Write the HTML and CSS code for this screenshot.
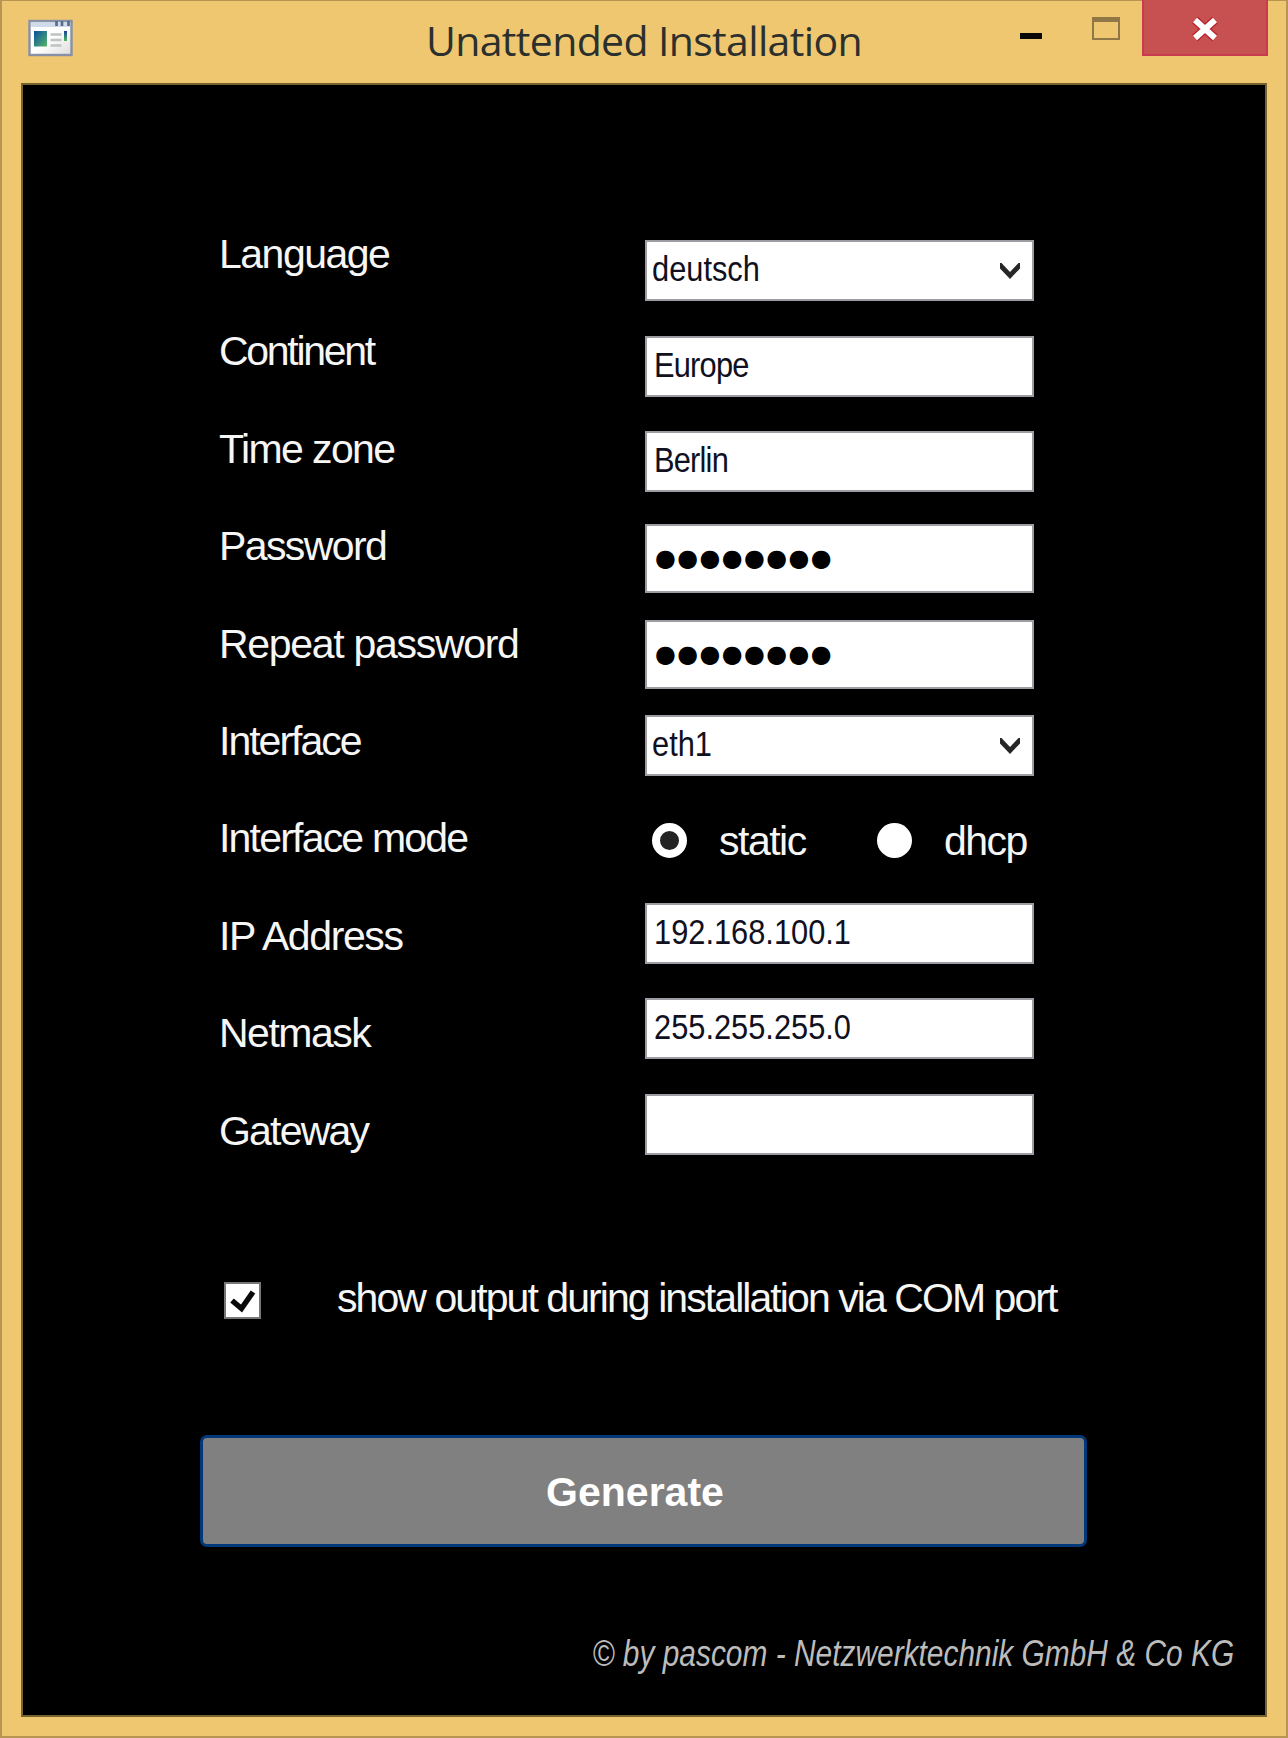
FILE: index.html
```html
<!DOCTYPE html>
<html lang="en">
<head>
<meta charset="utf-8">
<title>Unattended Installation</title>
<link rel="stylesheet" href="styles.css">
</head>
<body>
<div class="window">
  <header class="titlebar">
    <svg class="app-icon" width="46" height="38" viewBox="0 0 46 38">
      <defs>
        <linearGradient id="pane" x1="0" y1="0" x2="1" y2="1"><stop offset="0" stop-color="#0b4f9c"/><stop offset="1" stop-color="#55b56a"/></linearGradient>
        <linearGradient id="bar" x1="0" y1="0" x2="0" y2="1"><stop offset="0" stop-color="#1b3f9c"/><stop offset="1" stop-color="#4fb95c"/></linearGradient>
        <linearGradient id="paper" x1="0" y1="0" x2="1" y2="1"><stop offset="0.5" stop-color="#ffffff"/><stop offset="1" stop-color="#dcdcdc"/></linearGradient>
      </defs>
      <rect x="1.5" y="2" width="42" height="34" fill="url(#paper)" stroke="#8790a5" stroke-width="2.4"/>
      <rect x="3" y="3" width="39" height="5" fill="#cfdbe8"/>
      <path d="M28.5 2v5M34 2v5M40.5 2v5" stroke="#56698a" stroke-width="2.6"/>
      <rect x="6" y="12" width="13" height="15.500" fill="url(#pane)"/>
      <path d="M22.500 15.500h11M22.500 21h11M22.500 26.500h11" stroke="#bfc1c3" stroke-width="2.600"/>
      <rect x="36" y="12" width="3" height="10" fill="url(#bar)"/>
    </svg>
    <h1 class="title">Unattended Installation</h1>
    <div class="controls">
      <span class="minimize"></span>
      <span class="maximize"></span>
      <span class="close">
        <svg width="30" height="28" viewBox="0 0 30 28"><path d="M5 5L25 23M25 5L5 23" stroke="#b8202c" stroke-width="8.500"/><path d="M5 5L25 23M25 5L5 23" stroke="#fff" stroke-width="6"/></svg>
      </span>
    </div>
  </header>

  <main class="content">
    <section class="form">
      <div class="labels">
        <label class="t-language">Language</label>
        <label class="t-continent">Continent</label>
        <label class="t-timezone">Time zone</label>
        <label class="t-password">Password</label>
        <label class="t-repeat">Repeat password</label>
        <label class="t-interface">Interface</label>
        <label class="t-mode">Interface mode</label>
        <label class="t-ip">IP Address</label>
        <label class="t-netmask">Netmask</label>
        <label class="t-gateway">Gateway</label>
      </div>
      <div class="fields">
        <div class="field select"><span class="value">deutsch</span>
          <svg class="chevron" width="20" height="16" viewBox="0 0 20 16"><path d="M0 0h1.500L10 9L18.500 0H20V5.500L10 16L0 5.500Z"/></svg></div>
        <div class="field"><span class="value tight">Europe</span></div>
        <div class="field"><span class="value tight">Berlin</span></div>
        <div class="field secret"><span>●●●●●●●●</span></div>
        <div class="field secret repeat"><span>●●●●●●●●</span></div>
        <div class="field select interface"><span class="value">eth1</span>
          <svg class="chevron" width="20" height="16" viewBox="0 0 20 16"><path d="M0 0h1.500L10 9L18.500 0H20V5.500L10 16L0 5.500Z"/></svg></div>
        <div class="modes">
          <span class="radio checked"></span><span class="mode static">static</span>
          <span class="radio"></span><span class="mode">dhcp</span>
        </div>
        <div class="field"><span class="value">192.168.100.1</span></div>
        <div class="field"><span class="value">255.255.255.0</span></div>
        <div class="field"></div>
      </div>
    </section>

    <div class="output">
      <span class="checkbox"><svg width="33" height="33" viewBox="0 0 33 33"><path d="M6 16.500L15.500 24.500L27 8" fill="none" stroke="#0a0a0a" stroke-width="5.500"/></svg></span>
      <span class="output-text">show output during installation via COM port</span>
    </div>

    <button class="generate">Generate</button>

    <footer class="copyright"><span>© by pascom - Netzwerktechnik GmbH &amp; Co KG</span></footer>
  </main>
</div>
</body>
</html>
```

FILE: styles.css
```css
* { box-sizing: border-box; }

body {
  margin: 0;
  background: #eec770;
  font-family: "Liberation Sans", Arial, sans-serif;
}

.window {
  display: grid;
  grid-template-rows: 82px 1635px;
  width: 1288px;
  height: 1738px;
  padding: 0 20px 0 19px;
  background: #eec770;
  border: solid #b89550;
  border-width: 1px 2px 2px;
}

/* Title bar */
.titlebar {
  display: grid;
  grid-template-columns: 405px 594px 248px;
  align-items: start;
}

.app-icon { margin: 18px 0 0 7px; }

.title {
  margin: 11px 0 0;
  font: 400 41px/56px "Open Sans", "Noto Sans", sans-serif;
  letter-spacing: -0.650px;
  color: #2c302d;
  white-space: nowrap;
}

.controls { display: flex; align-items: flex-start; }

.minimize { width: 22px; height: 6px; margin: 32px 50px 0 0; background: #080808; }

.maximize {
  width: 28px;
  height: 23px;
  margin: 16px 22px 0 0;
  border: 2px solid #907846;
  border-top-width: 5px;
}

.close {
  display: flex;
  flex: none;
  align-items: center;
  justify-content: center;
  width: 126px;
  height: 56px;
  margin-top: -1px;
  padding-top: 4px;
  background: #c75050;
  border: solid #c73a50;
  border-width: 0 2px 2px;
}

/* Client area */
.content {
  width: 1246px;
  height: 1634px;
  background: #000;
  border: 2px solid #78622f;
  padding-top: 120px;
}

.form { display: flex; padding-left: 196px; }

.labels { display: flex; flex-direction: column; width: 426px; padding-top: 1px; }

.labels label {
  height: 97.4px;
  font-size: 41px;
  line-height: 97.4px;
  color: #f6f6f6;
  white-space: nowrap;
}

.t-language { letter-spacing: -1.5px; }
.t-continent { letter-spacing: -2.3px; }
.t-timezone { letter-spacing: -1.6px; }
.t-password { letter-spacing: -1.6px; }
.t-repeat { letter-spacing: -1.300px; }
.t-interface { letter-spacing: -2px; }
.t-mode { letter-spacing: -1.8px; }
.t-ip { letter-spacing: -1.4px; }
.t-netmask { letter-spacing: -1.5px; }
.t-gateway { letter-spacing: -1.8px; }

.fields { width: 389px; padding-top: 35px; }

.field {
  display: flex;
  align-items: center;
  justify-content: space-between;
  height: 61px;
  margin-bottom: 34.5px;
  padding: 0 12px 3px 7px;
  font-size: 35px;
  color: #101020;
  background: #fff;
  border: 2px solid #9c9ca2;
  white-space: nowrap;
}

.select { padding-left: 5px; }

.value { transform: scaleX(0.88); transform-origin: left center; }
.value.tight { letter-spacing: -0.900px; }

.chevron { margin-top: 4px; fill: #262626; }

.secret {
  height: 69px;
  margin: -2.500px 0 26.500px;
  padding: 0 0 1px 8px;
  font-family: "DejaVu Sans", sans-serif;
  font-size: 24px;
  letter-spacing: 1.300px;
  color: #000;
}

.secret.repeat { margin-top: 0; margin-bottom: 26px; }

.interface { margin-bottom: 0; }

.modes {
  display: flex;
  align-items: center;
  height: 127px;
  padding: 2px 0 0 7px;
  font-size: 41px;
  letter-spacing: -1.500px;
  color: #f6f6f6;
}

.radio { flex: none; width: 35px; height: 35px; background: #fff; border-radius: 50%; }
.radio.checked { background: #222; border: 8px solid #fff; }
.mode { margin-left: 32px; padding-top: 2px; }
.mode.static { width: 158px; }

/* Options and actions */
.output {
  display: flex;
  align-items: center;
  height: 46px;
  margin: 86px 0 0 201px;
  font-size: 41px;
  letter-spacing: -1.930px;
  color: #f6f6f6;
  white-space: nowrap;
}

.checkbox {
  flex: none;
  width: 37px;
  height: 37px;
  margin: 5px 76px 0 0;
  background: #fff;
  border: 2px solid #777;
}

.checkbox svg { display: block; }

.generate {
  display: block;
  width: 887px;
  height: 112px;
  margin: 114px 0 0 177px;
  padding: 1px 0 0;
  font: 700 41px/50px "Liberation Sans", Arial, sans-serif;
  text-indent: -17px;
  color: #fff;
  background: #808080;
  border: 3px solid #00387a;
  border-radius: 7px;
}

.copyright {
  display: flex;
  justify-content: flex-end;
  margin-top: 85px;
  padding-right: 31px;
  font-size: 37px;
  font-style: italic;
  line-height: 44px;
  color: #bcbcbc;
  white-space: nowrap;
}

.copyright span { transform: scaleX(0.808); transform-origin: right center; }
```
